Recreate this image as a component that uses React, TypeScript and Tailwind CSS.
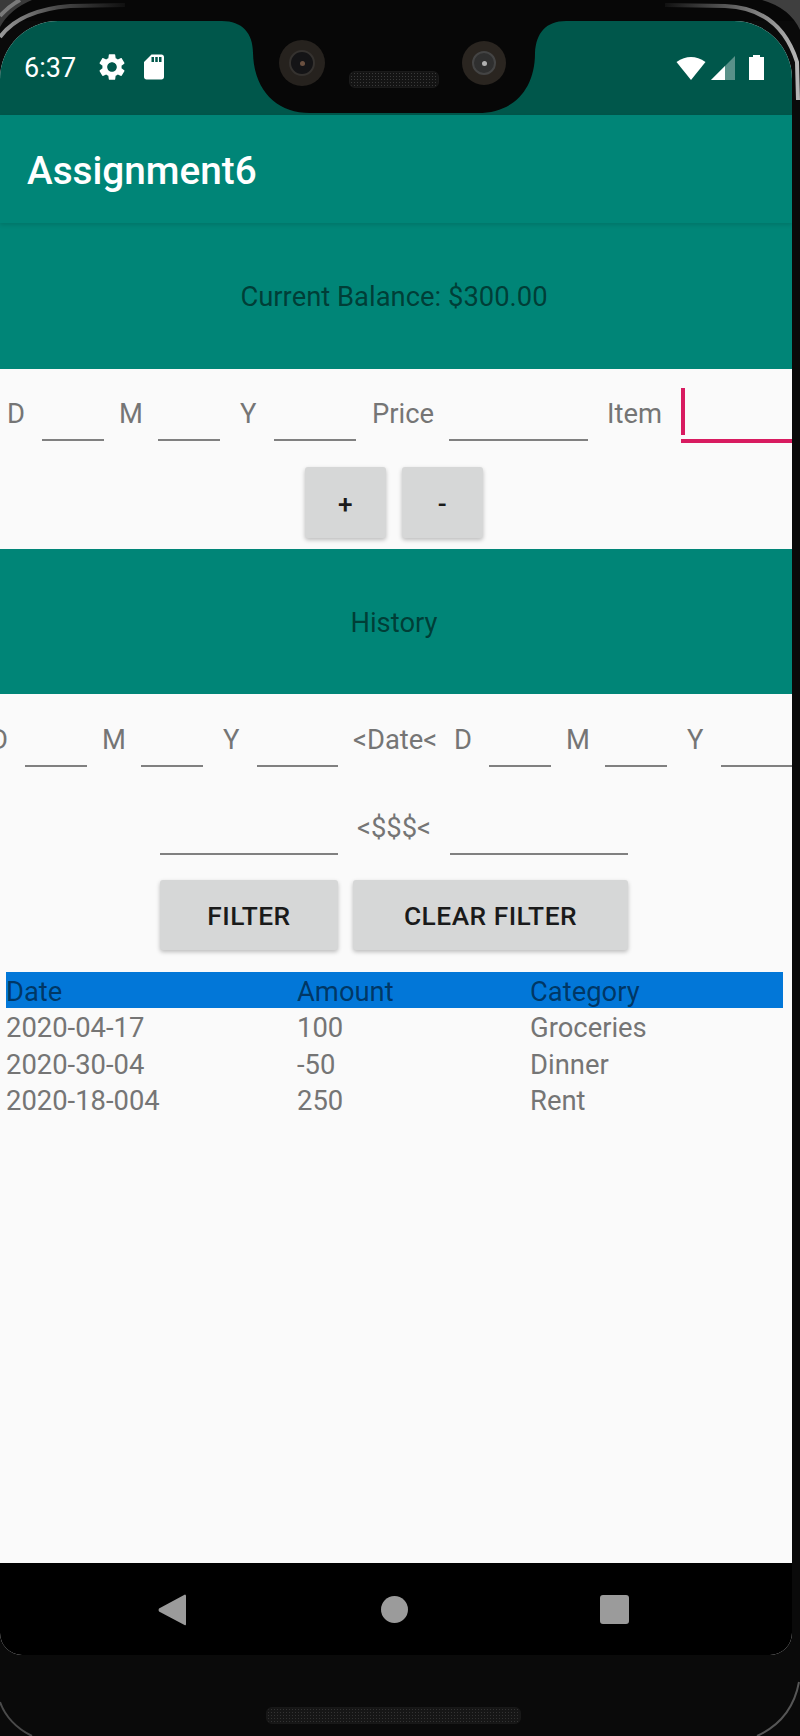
import React from 'react';

const fieldFont = "font-['Roboto',sans-serif]";

const BezelArcs = () => (
  <svg className="absolute inset-0 pointer-events-none" width="800" height="1736" viewBox="0 0 800 1736" fill="none">
    <defs>
      <linearGradient id="fadeLeft" x1="0" y1="0" x2="1" y2="0">
        <stop offset="0" stopColor="#9a9a9a" />
        <stop offset="0.45" stopColor="#4a4a4a" />
        <stop offset="1" stopColor="#101010" />
      </linearGradient>
      <linearGradient id="fadeRight" x1="0" y1="0" x2="1" y2="0">
        <stop offset="0" stopColor="#111" />
        <stop offset="0.45" stopColor="#555" />
        <stop offset="1" stopColor="#b5b5b5" />
      </linearGradient>
    </defs>
    {/* top left corner */}
    <path d="M0 27 Q10 9 32 0 L0 0 Z" fill="#3a3a3a" />
    <path d="M0 16 Q9 6 20 0" stroke="#7a7a7a" strokeWidth="4" />
    <path d="M0 37 Q20 10 70 6 L125 5" stroke="url(#fadeLeft)" strokeWidth="4" />
    {/* top right corner */}
    <path d="M762 0 Q790 8 800 30 L800 0 Z" fill="#3f3f3f" />
    <path d="M665 5 L725 6 Q780 8 797 62 L798 100" stroke="url(#fadeRight)" strokeWidth="4" />
    {/* bottom corners */}
    <path d="M0 1702 Q8 1724 32 1736" stroke="#4a4a4a" strokeWidth="2" />
    <path d="M799 1682 Q792 1720 757 1736" stroke="#565656" strokeWidth="2" />
  </svg>
);

const Notch = () => (
  <div className="absolute left-0 top-0 w-full h-[94px]">
    <svg className="absolute left-[222px] top-0" width="344" height="94" viewBox="0 0 344 94">
      <path d="M0 0 C20 0 31 12 31 32 C32 70 55 92 88 92 L256 92 C290 92 313 70 313 32 C314 12 324 0 344 0 Z" fill="#070707" />
    </svg>
    <div className="absolute left-[279px] top-[19px] w-[46px] h-[46px] rounded-full bg-[#26221e] flex items-center justify-center">
      <div className="w-[26px] h-[26px] rounded-full bg-[#141416] border-2 border-[#35322f] flex items-center justify-center">
        <div className="w-[5px] h-[5px] rounded-full bg-[#6a5040]" />
      </div>
    </div>
    <div className="absolute left-[462px] top-[20px] w-[44px] h-[44px] rounded-full bg-[#2a2520] flex items-center justify-center">
      <div className="w-[24px] h-[24px] rounded-full bg-[#2f2f2f] border-2 border-[#444] flex items-center justify-center">
        <div className="w-[5px] h-[5px] rounded-full bg-[#b0b0b0]" />
      </div>
    </div>
    <div className="absolute left-[349px] top-[50px] w-[90px] h-[17px] rounded-[6px] border border-[#1a1a1a] bg-[radial-gradient(#3a3a3a_1px,#141414_1px)] bg-[length:3px_3px]" />
  </div>
);

const StatusBar = () => (
  <div className="relative h-[94px] bg-[#00574b] shrink-0">
    <Notch />
    <div className="relative flex items-center h-full pb-[2px] text-white">
      <span className="ml-[24px] mt-[2px] w-[52px] font-['Roboto',sans-serif] text-[27px] leading-none">6:37</span>
      <svg className="ml-[20px]" width="32" height="32" viewBox="0 0 24 24" fill="#fff">
        <path d="M19.14 12.94c.04-.3.06-.61.06-.94 0-.32-.02-.64-.07-.94l2.03-1.58c.18-.14.23-.41.12-.61l-1.92-3.32c-.12-.22-.37-.29-.59-.22l-2.39.96c-.5-.38-1.03-.7-1.62-.94l-.36-2.54c-.04-.24-.24-.41-.48-.41h-3.84c-.24 0-.43.17-.47.41l-.36 2.54c-.59.24-1.13.57-1.62.94l-2.39-.96c-.22-.08-.47 0-.59.22L2.74 8.87c-.12.21-.08.47.12.61l2.03 1.58c-.05.3-.09.63-.09.94s.02.64.07.94l-2.03 1.58c-.18.14-.23.41-.12.61l1.92 3.32c.12.22.37.29.59.22l2.39-.96c.5.38 1.03.7 1.62.94l.36 2.54c.05.24.24.41.48.41h3.84c.24 0 .44-.17.47-.41l.36-2.54c.59-.24 1.13-.56 1.62-.94l2.39.96c.22.08.47 0 .59-.22l1.92-3.32c.12-.22.07-.47-.12-.61l-2.01-1.58zM12 15.6c-1.98 0-3.6-1.62-3.6-3.6s1.62-3.6 3.6-3.6 3.6 1.62 3.6 3.6-1.62 3.6-3.6 3.6z" />
      </svg>
      <svg className="ml-[11px]" width="30" height="30" viewBox="0 0 24 24" fill="#fff">
        <path d="M18 2h-8L4.02 8 4 20c0 1.1.9 2 2 2h12c1.1 0 2-.9 2-2V4c0-1.1-.9-2-2-2zm-6 6h-2V4h2v4zm3 0h-2V4h2v4zm3 0h-2V4h2v4z" />
      </svg>
      <div className="ml-auto mr-[28px] flex items-center">
        <svg width="30" height="25" viewBox="0 0 30 25" fill="#fff">
          <path d="M15 25 L0.5 7 Q15 -3 29.5 7 Z" />
        </svg>
        <svg className="ml-[5px]" width="24" height="25" viewBox="0 0 24 25">
          <path d="M0 25 L24 1 L24 25 Z" fill="#fff" fillOpacity="0.35" />
          <path d="M0 25 L14 11 L14 25 Z" fill="#fff" />
        </svg>
        <svg className="ml-[14px]" width="15" height="25" viewBox="0 0 15 25" fill="#fff">
          <path d="M4 0 H11 V2 H15 V25 H0 V2 H4 Z" />
        </svg>
      </div>
    </div>
  </div>
);

type FieldProps = {
  label: string;
  labelClass: string;
  lineClass: string;
};

// one "label + underlined empty input" pair of the form rows
const Field = ({ label, labelClass, lineClass }: FieldProps) => (
  <>
    <span className={`shrink-0 self-center text-[27.4px] leading-none whitespace-nowrap text-[#757575] ${labelClass}`}>{label}</span>
    <div className={`shrink-0 h-[53px] border-b-2 border-[#808080] ${lineClass}`} />
  </>
);

const GreyButton = ({ label, className }: { label: string; className: string }) => (
  <button className={`shrink-0 rounded-[3px] bg-[#d6d7d7] shadow-[0_2px_4px_rgba(0,0,0,0.25)] pt-[3px] font-['Roboto',sans-serif] font-medium text-[#1a1a1a] text-[26.3px] tracking-[0.5px] leading-none ${className}`}>
    {label}
  </button>
);

const Banner = ({ text, className }: { text: string; className: string }) => (
  <div className={`shrink-0 flex items-center justify-center bg-[#008577] text-[27.4px] text-black/55 ${className}`}>
    {text}
  </div>
);

const rows = [
  { date: '2020-04-17', amount: '100', category: 'Groceries' },
  { date: '2020-30-04', amount: '-50', category: 'Dinner' },
  { date: '2020-18-004', amount: '250', category: 'Rent' },
];

const App = () => {
  return (
    <div className={`relative w-[800px] h-[1736px] bg-[#0a0a0a] overflow-hidden pt-[21px] pr-[8px] ${fieldFont}`}>
      <div className="h-[21px] absolute inset-x-0 top-0 bg-[#070707]" />
      <div className="relative flex flex-col w-[792px] h-[1634px] rounded-t-[58px] rounded-b-[22px] overflow-hidden bg-[#fafafa]">
        <StatusBar />
        <div className="relative z-10 shrink-0 h-[108px] flex items-center pl-[27px] pt-[4px] bg-[#008577] shadow-[0_2px_4px_rgba(0,0,0,0.12)]">
          <span className="text-white font-medium text-[38.7px] leading-none">Assignment6</span>
        </div>
        <Banner text="Current Balance: $300.00" className="-ml-1 w-[796px] h-[146px] pt-[3px]" />

        <div className="-ml-1 w-[796px] flex-1 flex flex-col min-h-0">
          <div className="shrink-0 h-[180px] flex flex-col">
            <div className="flex mt-[19px] h-[55px] items-start">
              <Field label="D" labelClass="pb-[2px] ml-[11px] w-[35px]" lineClass="w-[62px]" />
              <Field label="M" labelClass="pb-[2px] ml-[15px] w-[39px]" lineClass="w-[62px]" />
              <Field label="Y" labelClass="pb-[2px] ml-[20px] w-[34px]" lineClass="w-[82px]" />
              <Field label="Price" labelClass="pb-[2px] ml-[16px] w-[77px]" lineClass="w-[139px]" />
              <span className="shrink-0 self-center pb-[2px] ml-[19px] w-[74px] text-[27.4px] leading-none text-[#757575]">Item</span>
              <div className="shrink-0 w-[115px] h-[55px] border-b-4 border-[#d81b60]">
                <div className="w-1 h-[47px] bg-[#d81b60]" />
              </div>
            </div>
            <div className="flex justify-center gap-4 mt-[24px]">
              <GreyButton label="+" className="w-[81px] h-[71px]" />
              <GreyButton label="-" className="w-[81px] h-[71px]" />
            </div>
          </div>

          <Banner text="History" className="h-[145px] pt-[4px]" />

          <div className="flex mt-[20px] h-[53px] items-start">
            <Field label="D" labelClass="-ml-[6px] w-[35px]" lineClass="w-[62px]" />
            <Field label="M" labelClass="ml-[15px] w-[39px]" lineClass="w-[62px]" />
            <Field label="Y" labelClass="ml-[20px] w-[34px]" lineClass="w-[81px]" />
            <Field label="<Date<" labelClass="ml-[15px] w-[101px]" lineClass="w-0 border-b-0" />
            <Field label="D" labelClass="w-[35px]" lineClass="w-[62px]" />
            <Field label="M" labelClass="ml-[15px] w-[39px]" lineClass="w-[62px]" />
            <Field label="Y" labelClass="ml-[20px] w-[34px]" lineClass="w-[80px]" />
          </div>

          <div className="flex justify-center mt-[35px] h-[53px]">
            <div className="shrink-0 w-[178px] h-[53px] border-b-2 border-[#808080]" />
            <span className="shrink-0 self-center w-[112px] text-center text-[27.4px] leading-none text-[#757575]">&lt;$$$&lt;</span>
            <div className="shrink-0 w-[178px] h-[53px] border-b-2 border-[#808080]" />
          </div>

          <div className="flex justify-center gap-[15px] mt-[25px]">
            <GreyButton label="FILTER" className="w-[178px] h-[70px]" />
            <GreyButton label="CLEAR FILTER" className="w-[275px] h-[70px]" />
          </div>

          <div className="mt-[22px] ml-[10px] w-[777px] text-[27.4px] leading-[40px] text-[#757575]">
            <div className="grid grid-cols-[291px_233px_1fr] h-[36px] bg-[#0277d8] text-black/55">
              <span>Date</span>
              <span>Amount</span>
              <span>Category</span>
            </div>
            {rows.map((row) => (
              <div key={row.date} className="grid grid-cols-[291px_233px_1fr] h-[36.5px]">
                <span>{row.date}</span>
                <span>{row.amount}</span>
                <span>{row.category}</span>
              </div>
            ))}
          </div>
        </div>

        <div className="shrink-0 h-[92px] bg-black relative">
          <svg className="absolute left-[158px] top-[31px]" width="28" height="32" viewBox="0 0 28 32" fill="#9b9b9b">
            <path d="M27 0.5 Q28 0.5 28 2 V30 Q28 32 26.5 31 L1 17.5 Q0 16 1 14.5 Z" />
          </svg>
          <div className="absolute left-[381px] top-[33px] w-[27px] h-[27px] rounded-full bg-[#9b9b9b]" />
          <div className="absolute left-[600px] top-[32px] w-[29px] h-[29px] rounded-[3px] bg-[#9b9b9b]" />
        </div>
      </div>

      <div className="flex justify-center mt-[52px]">
        <div className="w-[255px] h-[17px] ml-[-6px] rounded-[6px] border border-[#181818] bg-[radial-gradient(#333_1px,#161616_1px)] bg-[length:3px_3px]" />
      </div>
      <BezelArcs />
    </div>
  );
};

export default App;
